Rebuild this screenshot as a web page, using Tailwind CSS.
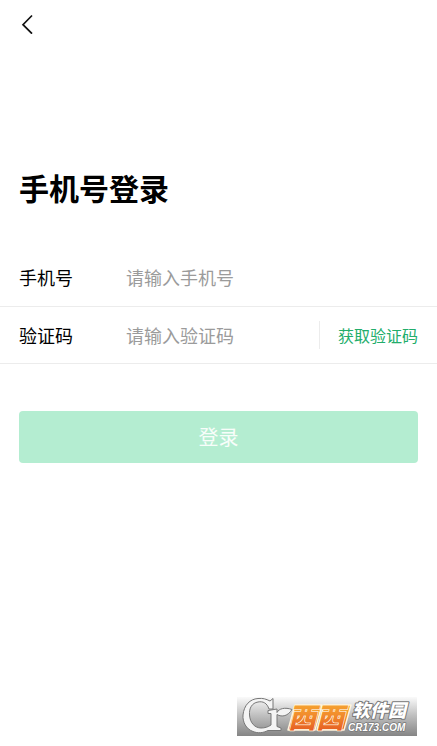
<!DOCTYPE html>
<html lang="zh-CN">
<head>
<meta charset="utf-8">
<meta name="viewport" content="width=device-width, initial-scale=1">
<title>手机号登录</title>
<script src="https://cdn.jsdelivr.net/npm/@tailwindcss/browser@4"></script>
</head>
<body class="flex min-h-screen flex-col bg-white font-['Noto_Sans_CJK_SC',sans-serif] text-black">
  <header class="flex h-12 items-center px-[19px]">
    <button type="button" aria-label="返回" class="flex size-6 items-center">
      <svg class="h-5 w-4" viewBox="0 0 16 20" fill="none" stroke="#111" stroke-width="1.7"><path d="M13 1.500 4 10.700 13 19.700"/></svg>
    </button>
  </header>
  <main class="flex-1">
    <h1 class="mt-[119px] px-[19px] text-[30px] leading-10 font-bold">手机号登录</h1>
    <form class="mt-[41px]">
      <div class="flex h-[59px] items-center border-b border-[#ececec] px-[19px]">
        <label for="phone" class="w-[107px] text-[18px]">手机号</label>
        <input id="phone" type="tel" placeholder="请输入手机号" class="min-w-0 flex-1 text-[18px] outline-none placeholder:text-[#9b9b9b]">
      </div>
      <div class="flex h-[57px] items-center border-b border-[#ececec] px-[19px]">
        <label for="code" class="w-[107px] text-[18px]">验证码</label>
        <input id="code" type="text" placeholder="请输入验证码" class="min-w-0 flex-1 text-[18px] outline-none placeholder:text-[#9b9b9b]">
        <button type="button" class="h-7 border-l border-[#ececec] pl-[18px] text-[16px] text-[#22ad6b]">获取验证码</button>
      </div>
      <div class="px-[19px] pt-[47px]">
        <button type="submit" class="h-[52px] w-full rounded bg-[#b4edd1] text-[20px] text-white/90">登录</button>
      </div>
    </form>
  </main>
  <footer class="flex justify-end pr-5 pb-[10px]">
    <svg class="h-[39px] w-[180px] overflow-visible" viewBox="0 0 180 39" role="img" aria-label="西西软件园 CR173.COM">
      <defs>
        <linearGradient id="bg" x2="0" y2="1"><stop stop-color="#fafafa"/><stop offset=".45" stop-color="#c2c2c2"/><stop offset="1" stop-color="#858585"/></linearGradient>
        <linearGradient id="orange" x2="0" y2="1"><stop stop-color="#f8b432"/><stop offset=".5" stop-color="#f18a2c"/><stop offset="1" stop-color="#e24e20"/></linearGradient>
      </defs>
      <path fill="url(#bg)" d="M0 0h180v39H0z"/>
      <path fill="#f4f4f4" stroke="#777" stroke-width="1" stroke-linejoin="round" d="M33 4 36 1.500V12H32C30 6 26 4 21 5 15 6 12 11 12.500 18 13 26 18 31 24 31 28 31 31 30 34 28V16.500H31V13.500L40 12V15.500C42 11.500 48 10 55 12.500 51 19 45 20.500 40 17.500V29.500L44 31V33.500H31C26 36 21 36.500 16 34.500 9 32 5.500 25 6 18 7 8 13 2 21 1.500 26 1 29 2 33 4Z"/>
      <g fill="url(#orange)" stroke="#fff3dc" stroke-width="1.500" stroke-linejoin="round">
        <path d="M58 8H85L78 33H51Z"/>
        <path d="M87 8H114L107 33H80Z"/>
      </g>
      <g font-family="'Noto Sans CJK SC', sans-serif" font-weight="900" font-style="italic" paint-order="stroke" stroke-linejoin="round">
        <text x="51" y="31" font-size="28" fill="url(#orange)" stroke="#fff3dc" stroke-width="1.500">西西</text>
        <text x="115" y="20" font-size="18" fill="#fff" stroke="#777" stroke-width="2">软件园</text>
      </g>
      <text x="111" y="34" font-family="'Liberation Sans', sans-serif" font-size="10" font-weight="700" font-style="italic" fill="#fff" stroke="#777" stroke-width="1.500" paint-order="stroke" stroke-linejoin="round">CR173.COM</text>
    </svg>
  </footer>
</body>
</html>
